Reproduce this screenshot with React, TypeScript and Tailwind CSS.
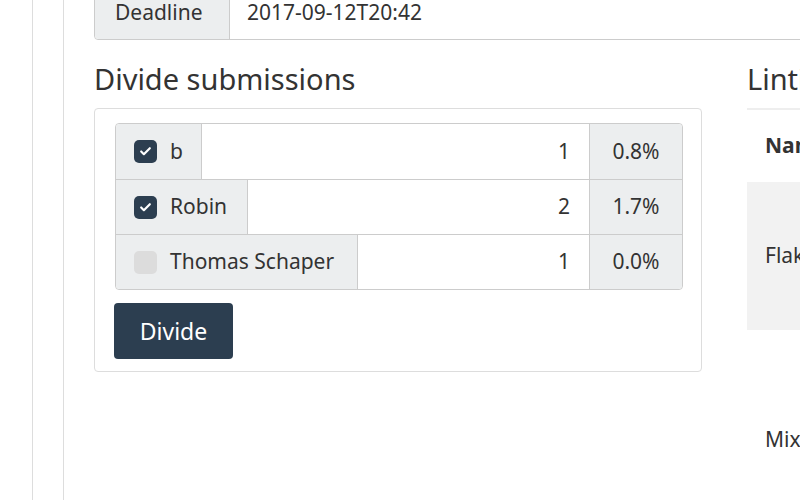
import { Check } from 'lucide-react'

const rows = [
  { name: 'b', checked: true, count: 1, pct: '0.8%', w: 'w-[86px]' },
  { name: 'Robin', checked: true, count: 2, pct: '1.7%', w: 'w-[132px]' },
  { name: 'Thomas Schaper', checked: false, count: 1, pct: '0.0%', w: 'w-[242px]' },
]

export default function App() {
  return (
    <div
      className="w-[800px] h-[500px] overflow-hidden bg-white text-[#333] flex"
      style={{ fontFamily: '"Noto Sans", "Open Sans", sans-serif' }}
    >
      <div className="w-[32px] shrink-0" />
      <div className="w-[31px] shrink-0 border-l border-[#ddd]" />
      <div className="flex-1 border-l border-[#ddd] pl-[30px] min-w-0">
        {/* Deadline */}
        <div className="-mt-[15px] flex h-[55px] w-[760px] border border-[#ccc] rounded-[4px] text-[21px]">
          <div className="w-[135px] shrink-0 flex items-center pl-[20px] bg-[#eceeef] border-r border-[#ccc] rounded-l-[4px]">
            Deadline
          </div>
          <div className="flex items-center pl-[17px]">2017-09-12T20:42</div>
        </div>

        <div className="flex gap-[45px] mt-[19px]">
          {/* Divide submissions */}
          <div className="w-[608px] shrink-0">
            <h3 className="text-[29px] leading-[40px] mb-[9px] whitespace-nowrap">Divide submissions</h3>
            <div className="border border-[#ddd] rounded-[4px] pl-[20px] pr-[18px] pt-[14px] pb-[12px]">
              <div className="border border-[#ccc] rounded-[4px] text-[21px]">
                {rows.map((r, i) => (
                  <div
                    key={r.name}
                    className={`flex h-[55px] ${i > 0 ? 'border-t border-[#ccc]' : ''}`}
                  >
                    <div className={`${r.w} shrink-0 flex items-center gap-[13px] pl-[18px] bg-[#eceeef] border-r border-[#ccc] whitespace-nowrap ${i === 0 ? 'rounded-tl-[4px]' : ''} ${i === 2 ? 'rounded-bl-[4px]' : ''}`}>
                      <span
                        className={`w-[23px] h-[23px] shrink-0 rounded-[5px] flex items-center justify-center ${r.checked ? 'bg-[#2c3e50]' : 'bg-[#dcdcdc]'}`}
                      >
                        {r.checked && <Check className="w-[13px] h-[13px] text-white" strokeWidth={4} />}
                      </span>
                      {r.name}
                    </div>
                    <div className="flex-1 flex items-center justify-end pr-[19px]">{r.count}</div>
                    <div className={`w-[93px] flex items-center justify-center bg-[#eceeef] border-l border-[#ccc] ${i === 0 ? 'rounded-tr-[4px]' : ''} ${i === 2 ? 'rounded-br-[4px]' : ''}`}>
                      {r.pct}
                    </div>
                  </div>
                ))}
              </div>
              <button className="mt-[13px] -ml-[1px] h-[56px] w-[119px] rounded-[4px] bg-[#2c3e50] text-white text-[23px]">
                Divide
              </button>
            </div>
          </div>

          {/* Lint */}
          <div className="flex-1 min-w-0">
            <h3 className="text-[29px] leading-[40px] mb-[9px] whitespace-nowrap">Linting</h3>
            <div className="border-t-2 border-[#eee] text-[21px]">
              <div className="h-[72px] flex items-center pl-[18px] font-bold whitespace-nowrap">Name</div>
              <div className="h-[148px] flex items-center pl-[18px] bg-[#f2f2f2] whitespace-nowrap">Flake8</div>
              <div className="h-[220px] flex items-center pl-[18px] whitespace-nowrap">Mixed</div>
            </div>
          </div>
        </div>
      </div>
    </div>
  )
}
